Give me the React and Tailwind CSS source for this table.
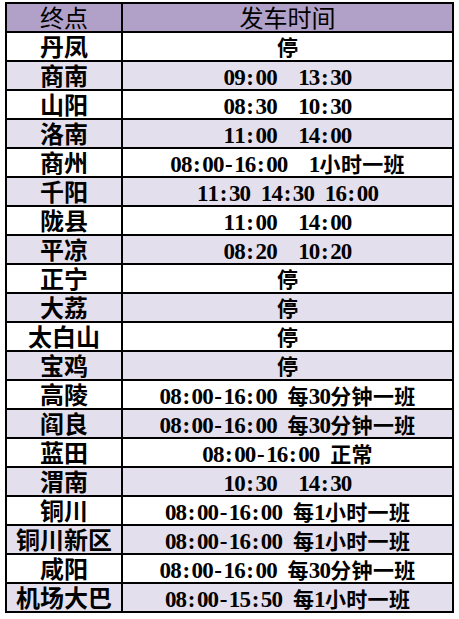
const ROWS = [
  ['丹凤', '停'],
  ['商南', '09:00  13:30'],
  ['山阳', '08:30  10:30'],
  ['洛南', '11:00  14:00'],
  ['商州', '08:00-16:00  1小时一班'],
  ['千阳', '11:30 14:30 16:00'],
  ['陇县', '11:00  14:00'],
  ['平凉', '08:20  10:20'],
  ['正宁', '停'],
  ['大荔', '停'],
  ['太白山', '停'],
  ['宝鸡', '停'],
  ['高陵', '08:00-16:00 每30分钟一班'],
  ['阎良', '08:00-16:00 每30分钟一班'],
  ['蓝田', '08:00-16:00 正常'],
  ['渭南', '10:30  14:30'],
  ['铜川', '08:00-16:00 每1小时一班'],
  ['铜川新区', '08:00-16:00 每1小时一班'],
  ['咸阳', '08:00-16:00 每30分钟一班'],
  ['机场大巴', '08:00-15:50 每1小时一班'],
];

// half-width cells for ASCII, full-width for CJK, like a song-style grid font
function Mono({ text }) {
  return (
    <span className="inline-flex items-baseline">
      {Array.from(text).map((ch, i) =>
        ch.charCodeAt(0) < 128 ? (
          <span key={i} className="inline-block w-[10.67px] text-center text-[23px] whitespace-pre">{ch}</span>
        ) : (
          <span key={i} className="inline-block w-[21.33px] text-center text-[21px]">{ch}</span>
        )
      )}
    </span>
  );
}

export default function App() {
  return (
    <div className="min-h-[619px] bg-white pl-[5px] pt-[2px] font-['Liberation_Serif','Noto_Sans_CJK_SC',serif] text-black">
      <table className="border-collapse w-[449px] table-fixed">
        <colgroup>
          <col className="w-[116px]" />
          <col />
        </colgroup>
        <thead>
          <tr className="bg-[#b1a0c7] h-[29px]">
            <th className="border-2 border-black p-0 text-[24px] font-normal leading-none">
              <div className="flex justify-center pt-[3px]">终点</div>
            </th>
            <th className="border-2 border-black p-0 text-[24px] font-normal leading-none">
              <div className="flex justify-center pt-[3px]">发车时间</div>
            </th>
          </tr>
        </thead>
        <tbody>
          {ROWS.map(([stop, time], i) => (
            <tr key={stop} className={`h-[29px] ${i % 2 === 1 ? 'bg-[#e4dfec]' : 'bg-white'}`}>
              <td className="border-2 border-black p-0 text-[24px] font-bold leading-none">
                <div className="flex justify-center pt-[3px]">{stop}</div>
              </td>
              <td className="border-2 border-black p-0 font-bold leading-none">
                <div className="flex justify-center pt-[3px]">
                  <Mono text={time} />
                </div>
              </td>
            </tr>
          ))}
        </tbody>
      </table>
    </div>
  );
}
